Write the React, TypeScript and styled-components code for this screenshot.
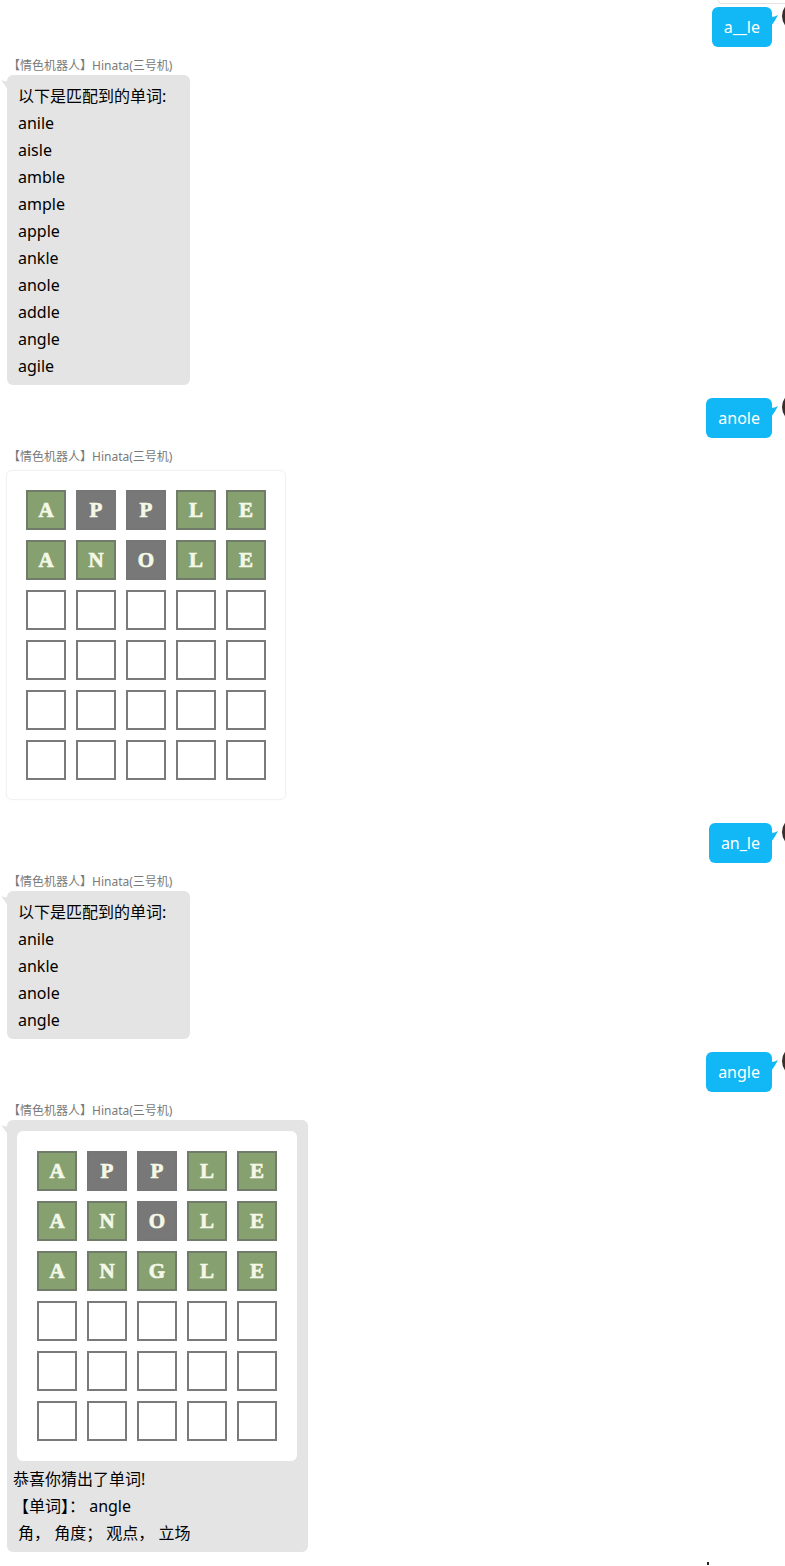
import React from "react";
import styled, { createGlobalStyle } from "styled-components";

const GlobalStyle = createGlobalStyle`
  html, body { margin: 0; padding: 0; background: #ffffff; }
  body {
    overflow-x: hidden;
    font-family: "Noto Sans", "Noto Sans CJK SC", sans-serif;
    color: #000000;
  }
`;

const Page = styled.div`
  display: flex;
  flex-direction: column;
  width: 785px;
  min-height: 1566px;
  overflow: hidden;
`;

const PrevEdge = styled.div`
  align-self: flex-end;
  width: 67px;
  height: 4px;
  box-sizing: border-box;
  border-left: 1px solid #e4e4e4;
  border-bottom: 1px solid #e4e4e4;
  border-bottom-left-radius: 6px;
  margin-bottom: 3px;
`;

const UserRow = styled.div<{ $mt: number }>`
  display: flex;
  justify-content: flex-end;
  align-items: flex-start;
  gap: 10px;
  margin-top: ${(p) => p.$mt}px;
`;

const UserBubble = styled.div`
  position: relative;
  height: 40px;
  line-height: 40px;
  padding: 0 12px;
  background: #12b7f5;
  color: #ffffff;
  border-radius: 6px;
  font-size: 16px;
`;

const UserTail = styled.svg`
  position: absolute;
  right: -6px;
  top: 8px;
  width: 7px;
  height: 12px;
`;

const Avatar = styled.div`
  flex-shrink: 0;
  width: 32px;
  height: 32px;
  border-radius: 50%;
  background: #3a2e2a;
  margin-top: -7px;
  margin-right: -29px;
`;

const BotMessage = styled.div<{ $mb?: number }>`
  display: flex;
  flex-direction: column;
  align-items: flex-start;
  margin-top: 10px;
  margin-bottom: ${(p) => p.$mb ?? 0}px;
`;

const SenderName = styled.div`
  font-size: 12px;
  line-height: 18px;
  color: #7a7a7a;
  padding-left: 8px;
`;

const Bubble = styled.div<{ $pad: string; $minW?: number }>`
  position: relative;
  box-sizing: border-box;
  min-width: ${(p) => p.$minW ?? 0}px;
  margin-left: 7px;
  padding: ${(p) => p.$pad};
  background: #e4e4e4;
  border-radius: 6px;
  font-size: 16px;
  line-height: 27px;
`;

const BotTail = styled.svg`
  position: absolute;
  left: -6px;
  top: 5px;
  width: 7px;
  height: 11px;
`;

const Line = styled.div<{ $indent?: number }>`
  white-space: pre;
  padding-left: ${(p) => p.$indent ?? 0}px;
`;

const Board = styled.div<{ $framed?: boolean }>`
  display: grid;
  grid-template-columns: repeat(5, 40px);
  grid-auto-rows: 40px;
  gap: 10px;
  width: fit-content;
  background: #ffffff;
  border-radius: 6px;
  padding: ${(p) => (p.$framed ? "19px" : "20px")};
  border: ${(p) => (p.$framed ? "1px solid #f2f2f2" : "none")};
  box-shadow: ${(p) => (p.$framed ? "0 0 2px rgba(0,0,0,0.04)" : "none")};
`;

const FramedBoard = styled(Board)`
  margin: 4px 0 0 6px;
`;

const InnerBoard = styled(Board)`
  margin: 0 0 5px 4px;
`;

type TileState = "hit" | "miss" | "empty";

const Tile = styled.div<{ $state: TileState }>`
  box-sizing: border-box;
  width: 40px;
  height: 40px;
  display: flex;
  align-items: center;
  justify-content: center;
  font-family: "Liberation Serif", serif;
  font-weight: 700;
  font-size: 21px;
  -webkit-text-stroke: 0.7px #f4f8e6;
  color: #f4f8e6;
  border: 2px solid
    ${(p) => (p.$state === "hit" ? "#717b69" : p.$state === "miss" ? "#767676" : "#7a7a7a")};
  background: ${(p) =>
    p.$state === "hit" ? "#86a070" : p.$state === "miss" ? "#787878" : "#ffffff"};
`;

const CursorRow = styled.div`
  display: flex;
  justify-content: flex-end;
  padding-right: 76px;
  margin-top: 10px;
`;

const CursorDot = styled.div`
  width: 2px;
  height: 3px;
  background: #222222;
`;

const NAME = "【情色机器人】Hinata(三号机)";

function User({ text, mt }: { text: string; mt: number }) {
  return (
    <UserRow $mt={mt}>
      <UserBubble>
        {text}
        <UserTail viewBox="0 0 7 12">
          <path d="M0 2 Q4 2 7 0 Q4 6 0 11 Z" fill="#12b7f5" />
        </UserTail>
      </UserBubble>
      <Avatar />
    </UserRow>
  );
}

function Tail() {
  return (
    <BotTail viewBox="0 0 7 11">
      <path d="M7 1 Q3 2 0 0 Q4 5 7 10 Z" fill="#e4e4e4" />
    </BotTail>
  );
}

type Guess = { word: string; hits: boolean[] };

function WordBoard({ guesses, inner }: { guesses: Guess[]; inner?: boolean }) {
  const cells: React.ReactNode[] = [];
  for (let r = 0; r < 6; r++) {
    for (let c = 0; c < 5; c++) {
      const g = guesses[r];
      const state: TileState = g ? (g.hits[c] ? "hit" : "miss") : "empty";
      cells.push(
        <Tile key={`${r}-${c}`} $state={state}>
          {g ? g.word[c] : ""}
        </Tile>
      );
    }
  }
  return inner ? <InnerBoard>{cells}</InnerBoard> : <FramedBoard $framed>{cells}</FramedBoard>;
}

const G1 = { word: "APPLE", hits: [true, false, false, true, true] };
const G2 = { word: "ANOLE", hits: [true, true, false, true, true] };
const G3 = { word: "ANGLE", hits: [true, true, true, true, true] };

const List1 = ["以下是匹配到的单词:", "anile", "aisle", "amble", "ample", "apple", "ankle", "anole", "addle", "angle", "agile"];
const List2 = ["以下是匹配到的单词:", "anile", "ankle", "anole", "angle"];

export default function App() {
  return (
    <>
      <GlobalStyle />
      <Page>
        <PrevEdge />
        <User text="a__le" mt={0} />
        <BotMessage>
          <SenderName>{NAME}</SenderName>
          <Bubble $pad="8px 12px 5px 11px" $minW={183}>
            <Tail />
            {List1.map((l) => (
              <Line key={l}>{l}</Line>
            ))}
          </Bubble>
        </BotMessage>

        <User text="anole" mt={13} />
        <BotMessage $mb={10}>
          <SenderName>{NAME}</SenderName>
          <WordBoard guesses={[G1, G2]} />
        </BotMessage>

        <User text="an_le" mt={13} />
        <BotMessage>
          <SenderName>{NAME}</SenderName>
          <Bubble $pad="8px 12px 5px 11px" $minW={183}>
            <Tail />
            {List2.map((l) => (
              <Line key={l}>{l}</Line>
            ))}
          </Bubble>
        </BotMessage>

        <User text="angle" mt={13} />
        <BotMessage>
          <SenderName>{NAME}</SenderName>
          <Bubble $pad="11px 11px 5px 6px">
            <Tail />
            <WordBoard guesses={[G1, G2, G3]} inner />
            <Line>恭喜你猜出了单词!</Line>
            <Line>【单词】： angle</Line>
            <Line $indent={5}>角， 角度； 观点， 立场</Line>
          </Bubble>
        </BotMessage>

        <CursorRow>
          <CursorDot />
        </CursorRow>
      </Page>
    </>
  );
}
